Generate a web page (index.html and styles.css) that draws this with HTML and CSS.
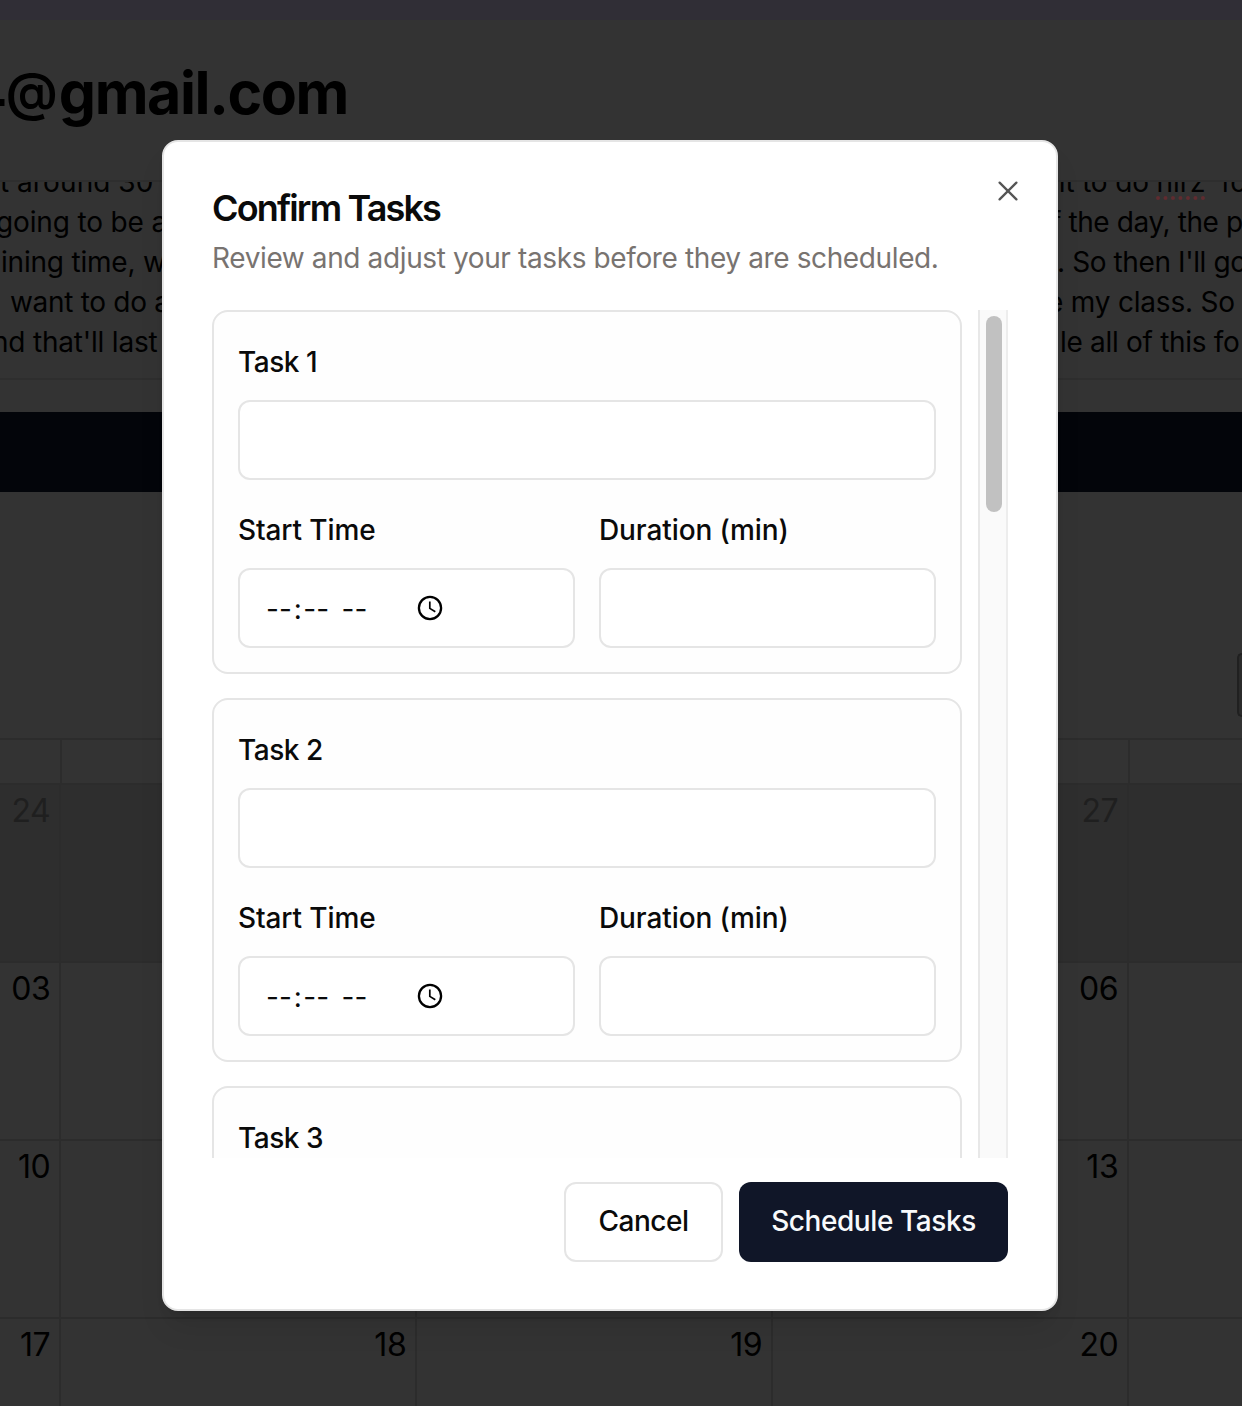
FILE: index.html
```html
<!DOCTYPE html>
<html lang="en">
<head>
<meta charset="utf-8">
<title>Confirm Tasks</title>
<link rel="stylesheet" href="styles.css">
</head>
<body>
<svg width="0" height="0" class="defs" aria-hidden="true">
  <symbol id="clock" viewBox="0 0 26 26">
    <circle cx="13" cy="13" r="11.1" fill="none" stroke="currentColor" stroke-width="2.3"/>
    <path d="M12.8 6.6V13.4L18.3 16.8" fill="none" stroke="currentColor" stroke-width="1.7"/>
  </symbol>
</svg>

<main class="page">
  <div class="strip"></div>
  <header class="account"><h1>4<span class="at">@</span>gmail.com</h1></header>
  <section class="notes">
    <div class="line"><span class="l1">t around 30 m</span><span class="r1">nt to do <u>hirz</u>&nbsp; for</span></div>
    <div class="line"><span class="l2">going to be a</span><span class="r2">f the day, the p</span></div>
    <div class="line"><span class="l3">ining time, w</span><span class="r3">. So then I'll go</span></div>
    <div class="line"><span class="l4">want to do a</span><span class="r4">e my class. So n</span></div>
    <div class="line"><span class="l5">nd that'll last</span><span class="r5">le all of this fo</span></div>
  </section>
  <div class="submit-bar"></div>
  <div class="toolbar"><div class="toolbar-button"></div></div>
  <section class="calendar">
    <div class="week head"><div></div><div></div><div></div><div></div><div></div></div>
    <div class="week off"><div>24</div><div>25</div><div>26</div><div>27</div><div></div></div>
    <div class="week"><div>03</div><div>04</div><div>05</div><div>06</div><div></div></div>
    <div class="week"><div>10</div><div>11</div><div>12</div><div>13</div><div></div></div>
    <div class="week"><div>17</div><div>18</div><div>19</div><div>20</div><div></div></div>
  </section>
</main>

<div class="dialog" role="dialog">
  <svg class="close" viewBox="0 0 20 20"><path d="M1.6 1.6L18.4 18.4M18.4 1.6L1.6 18.4" fill="none" stroke="currentColor" stroke-width="2.3" stroke-linecap="round"/></svg>
  <h2>Confirm Tasks</h2>
  <p class="description">Review and adjust your tasks before they are scheduled.</p>
  <div class="scroller">
    <div class="tasks">
      <div class="card">
        <div class="label task">Task 1</div>
        <div class="input"></div>
        <div class="columns">
          <div><div class="label start">Start Time</div><div class="input time"><span>--<span class="colon">:</span>--</span><span class="meridiem">--</span><svg class="clock"><use href="#clock"/></svg></div></div>
          <div><div class="label duration">Duration (min)</div><div class="input"></div></div>
        </div>
      </div>
      <div class="card">
        <div class="label task">Task 2</div>
        <div class="input"></div>
        <div class="columns">
          <div><div class="label start">Start Time</div><div class="input time"><span>--<span class="colon">:</span>--</span><span class="meridiem">--</span><svg class="clock"><use href="#clock"/></svg></div></div>
          <div><div class="label duration">Duration (min)</div><div class="input"></div></div>
        </div>
      </div>
      <div class="card">
        <div class="label task">Task 3</div>
        <div class="input"></div>
      </div>
    </div>
    <div class="track"><div class="thumb"></div></div>
  </div>
  <div class="actions">
    <div class="button cancel">Cancel</div>
    <div class="button primary">Schedule Tasks</div>
  </div>
</div>
</body>
</html>
```
FILE: styles.css
```css
* { box-sizing: border-box; }
body {
  margin: 0;
  width: 1242px;
  height: 1406px;
  overflow: hidden;
  position: relative;
  font-family: Inter, "Liberation Sans", sans-serif;
  font-size: 28px;
  color: #0a0a0a;
  background: #333;
}
.defs { position: absolute; }
h1, h2, p { margin: 0; }

/* dimmed page behind the dialog */
.page { height: 1406px; overflow: hidden; color: #000; }
.strip { height: 20px; background: #302e36; }
.account {
  width: 348px;
  height: 160px;
  display: flex;
  justify-content: flex-end;
  overflow: hidden;
}
h1 { font-size: 59px; line-height: 72px; font-weight: 700; letter-spacing: -1.4px; padding-top: 37px; }
.at { font-size: 52px; line-height: 1; font-weight: 600; letter-spacing: 1px; vertical-align: 4px; }
.notes {
  height: 200px;
  border-top: 2px solid #2e2e2e;
  border-bottom: 2px solid #2e2e2e;
  overflow: hidden;
}
.line { display: grid; grid-template-columns: 1058px 184px; height: 40px; line-height: 40px; letter-spacing: -.15px; white-space: nowrap; }
.line:first-child { margin-top: -20px; }
.line u { text-decoration: underline dotted #602c30 4px; text-underline-offset: 4px; text-decoration-skip-ink: none; }
.l1 { padding-left: 0; letter-spacing: .15px; word-spacing: -.4px; }
.l2 { margin-left: -4px; }
.l3 { padding-left: 1px; letter-spacing: -.2px; }
.l4 { padding-left: 10px; letter-spacing: -.3px; }
.l5 { margin-left: -8px; letter-spacing: -.2px; }
.r1 { margin-left: -9px; letter-spacing: -.15px; }
.r2 { margin-left: -7px; letter-spacing: -.4px; }
.r3 { margin-left: -1px; letter-spacing: -.4px; }
.r4 { margin-left: -11px; letter-spacing: -.2px; }
.r5 { padding-left: 2px; letter-spacing: -.3px; }
.submit-bar { height: 80px; margin-top: 32px; background: #03050a; }
.toolbar { height: 246px; padding-top: 161px; display: flex; justify-content: flex-end; }
.toolbar-button { width: 5px; height: 64px; border: 2px solid #202020; border-right: 0; border-radius: 8px 0 0 8px; background: #2b2b2b; }
.calendar { width: 1485px; }
.week {
  height: 178px;
  display: grid;
  grid-template-columns: 61px repeat(4, 356px);
  border-top: 2px solid #2c2c2c;
  font-size: 32px;
  line-height: 40px;
  letter-spacing: -.4px;
  text-align: right;
}
.week > div { border-right: 2px solid #2c2c2c; padding: 6px 8.7px 0 0; }
.head { height: 45px; grid-template-columns: 62px repeat(4, 356px); }
.off { background: #2e2e2e; color: #1f1f1f; }

/* dialog */
.dialog {
  position: absolute;
  left: 162px;
  top: 140px;
  width: 896px;
  height: 1171px;
  padding: 48px;
  border: 2px solid #e5e5e5;
  border-radius: 16px;
  background: #fff;
  box-shadow: 0 20px 30px -6px rgba(0, 0, 0, .1), 0 8px 12px -8px rgba(0, 0, 0, .2);
}
.close { position: absolute; right: 38px; top: 38.5px; width: 20px; height: 20px; color: #555; }
h2 { font-size: 36px; line-height: 36px; font-weight: 600; letter-spacing: -1.85px; white-space: nowrap; }
.description { line-height: 40px; margin-top: 12px; letter-spacing: -.38px; color: #787370; white-space: nowrap; }
.scroller { display: flex; gap: 16px; height: 848px; margin-top: 32px; overflow: hidden; }
.tasks { width: 750px; display: flex; flex-direction: column; gap: 24px; }
.card { flex: none; padding: 24px; border: 2px solid #e5e5e5; border-radius: 16px; background: #fefefe; }
.label { height: 52px; line-height: 52px; margin-bottom: 12px; font-weight: 500; white-space: nowrap; }
.task { letter-spacing: -.45px; }
.start { letter-spacing: -.1px; }
.duration { letter-spacing: -.1px; }
.input { height: 80px; border: 2px solid #e5e5e5; border-radius: 12px; background: #fff; }
.columns { display: grid; grid-template-columns: 1fr 1fr; gap: 24px; margin-top: 24px; }
.time { display: flex; align-items: center; padding-left: 26px; }
.time > span { padding-top: 1px; }
.colon { margin: 0 1.5px 0 2px; }
.meridiem { margin-left: 12.5px; }
.clock { width: 26px; height: 26px; margin: -1px 0 0 49.5px; color: #000; }
.track { width: 30px; padding: 6px; border-left: 2px solid #e8e8e8; border-right: 2px solid #ededed; background: #fafafa; }
.thumb { width: 16px; height: 196px; border-radius: 8px; background: #c1c1c1; }
.actions { display: flex; justify-content: flex-end; gap: 16px; margin-top: 23.5px; }
.button { height: 80px; line-height: 79px; border-radius: 12px; text-align: center; font-weight: 500; white-space: nowrap; }
.cancel { width: 159px; line-height: 75px; letter-spacing: -.5px; border: 2px solid #e5e5e5; }
.primary { width: 269px; letter-spacing: -.42px; background: #101628; color: #f8fafc; }
```
